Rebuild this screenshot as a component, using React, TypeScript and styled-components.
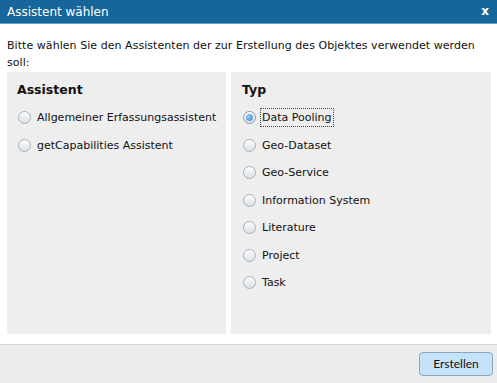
import React from "react";
import styled, { createGlobalStyle } from "styled-components";

const GlobalStyle = createGlobalStyle`
  html, body {
    margin: 0;
    padding: 0;
    background: #ffffff;
  }
  body {
    font-family: "DejaVu Sans", Verdana, sans-serif;
    color: #111;
  }
`;

const Dialog = styled.div`
  width: 497px;
  height: 383px;
  display: flex;
  flex-direction: column;
  background: #ffffff;
  overflow: hidden;
`;

const TitleBar = styled.div`
  height: 23px;
  border-bottom: 1px solid #6b9dc5;
  background: #17669b;
  display: flex;
  align-items: center;
  justify-content: space-between;
  padding: 0 8px 0 7px;
  color: #ffffff;
`;

const TitleText = styled.span`
  font-size: 12px;
`;

const CloseButton = styled.span`
  font-size: 12px;
  font-weight: 700;
  line-height: 1;
  margin-top: -2px;
`;

const Body = styled.div`
  flex: 1;
  display: flex;
  flex-direction: column;
  padding: 13px 6px 10px 7px;
`;

const Intro = styled.p`
  margin: 0 0 1px;
  font-size: 11px;
  line-height: 17px;
  width: 475px;
  letter-spacing: 0.05px;
`;

const Panels = styled.div`
  flex: 1;
  display: grid;
  grid-template-columns: 219px 1fr;
  gap: 5px;
`;

const Panel = styled.section<{ $indent: number }>`
  background: #eeeeee;
  padding: 10px 10px 0 ${(p) => p.$indent}px;
`;

const PanelTitle = styled.h2`
  margin: 0 0 6px -1px;
  font-size: 12.5px;
  font-weight: 700;
  line-height: 16px;
`;

const OptionList = styled.div`
  display: flex;
  flex-direction: column;
`;

const Option = styled.label`
  display: flex;
  align-items: center;
  gap: 7px;
  height: 27.5px;
  font-size: 11px;
  white-space: nowrap;
  cursor: pointer;
`;

const Radio = styled.span<{ $checked?: boolean }>`
  position: relative;
  width: 11px;
  height: 11px;
  border-radius: 50%;
  border: 1px solid ${(p) => (p.$checked ? "#7f98b0" : "#a9b0b7")};
  background: linear-gradient(#fdfdfd, #d9e1e8);
  flex: none;
  &::after {
    content: "";
    display: ${(p) => (p.$checked ? "block" : "none")};
    position: absolute;
    inset: 2px;
    border-radius: 50%;
    background: radial-gradient(circle at 40% 35%, #9cc7ec, #3d86c9);
  }
`;

const OptionLabel = styled.span<{ $focused?: boolean }>`
  padding: 2px 1px;
  margin-left: -2px;
  outline: ${(p) => (p.$focused ? "1px dotted #444" : "none")};
`;

const Footer = styled.div`
  height: 37px;
  border-top: 1px solid #d3d3d3;
  background: #ececec;
  display: flex;
  align-items: center;
  justify-content: flex-end;
  padding: 0 4px 1px 0;
`;

const Button = styled.button`
  width: 74px;
  height: 24px;
  border: 1px solid #85a8c4;
  border-radius: 4px;
  background: #c7e2f6;
  font-family: "Lato", "DejaVu Sans", sans-serif;
  font-size: 12px;
  color: #111;
  padding: 0;
`;

const assistants = ["Allgemeiner Erfassungsassistent", "getCapabilities Assistent"];
const types = [
  "Data Pooling",
  "Geo-Dataset",
  "Geo-Service",
  "Information System",
  "Literature",
  "Project",
  "Task",
];

export default function App() {
  const [type, setType] = React.useState("Data Pooling");
  const [assistant, setAssistant] = React.useState<string | null>(null);

  return (
    <Dialog>
      <GlobalStyle />
      <TitleBar>
        <TitleText>Assistent wählen</TitleText>
        <CloseButton>x</CloseButton>
      </TitleBar>
      <Body>
        <Intro>
          Bitte wählen Sie den Assistenten der zur Erstellung des Objektes verwendet werden soll:
        </Intro>
        <Panels>
          <Panel $indent={11}>
            <PanelTitle>Assistent</PanelTitle>
            <OptionList>
              {assistants.map((a) => (
                <Option key={a} onClick={() => setAssistant(a)}>
                  <Radio $checked={assistant === a} />
                  <OptionLabel>{a}</OptionLabel>
                </Option>
              ))}
            </OptionList>
          </Panel>
          <Panel $indent={12}>
            <PanelTitle>Typ</PanelTitle>
            <OptionList>
              {types.map((t) => (
                <Option key={t} onClick={() => setType(t)}>
                  <Radio $checked={type === t} />
                  <OptionLabel $focused={type === t}>{t}</OptionLabel>
                </Option>
              ))}
            </OptionList>
          </Panel>
        </Panels>
      </Body>
      <Footer>
        <Button>Erstellen</Button>
      </Footer>
    </Dialog>
  );
}
